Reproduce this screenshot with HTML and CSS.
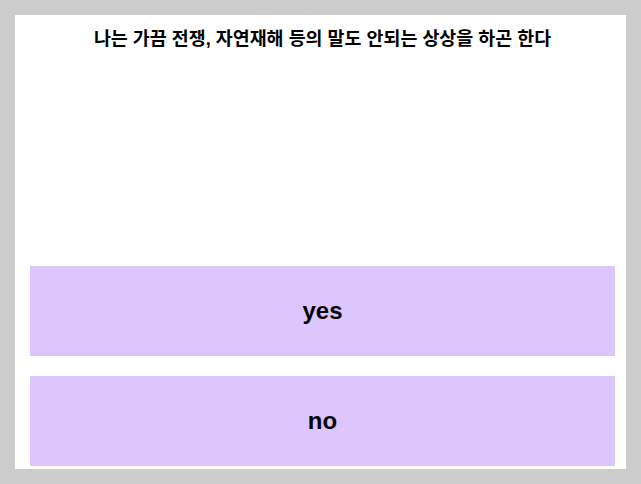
FILE: index.html
```html
<!DOCTYPE html>
<html lang="ko">
<head>
<meta charset="utf-8">
<link rel="stylesheet" href="styles.css">
</head>
<body>
<div class="panel">
  <h1 class="question">나는 가끔 전쟁, 자연재해 등의 말도 안되는 상상을 하곤 한다</h1>
  <div class="spacer"></div>
  <div class="answers">
    <button class="answer">yes</button>
    <button class="answer">no</button>
  </div>
</div>
</body>
</html>
```
FILE: styles.css
```css
html, body {
  margin: 0;
  padding: 0;
}
body {
  background: #cccccc;
  padding: 15px;
  height: 484px;
  box-sizing: border-box;
  font-family: "Liberation Sans", "Noto Sans CJK KR", sans-serif;
}
.panel {
  background: #ffffff;
  height: 454px;
  box-sizing: border-box;
  padding: 0 11px 3px 15px;
  display: flex;
  flex-direction: column;
}
.question {
  margin: 0;
  padding-top: 11px;
  font-family: "Liberation Sans", "Noto Sans CJK KR", sans-serif;
  font-size: 18.4px;
  font-weight: 700;
  line-height: 26px;
  text-align: center;
  color: #000000;
}
.spacer {
  flex: 1;
}
.answers {
  display: flex;
  flex-direction: column;
  gap: 20px;
}
.answer {
  display: block;
  width: 100%;
  height: 90px;
  border: none;
  margin: 0;
  padding: 0;
  background: #ddc6fd;
  font-family: "Liberation Sans", Arial, sans-serif;
  font-size: 24px;
  font-weight: 700;
  color: #000000;
}
```
